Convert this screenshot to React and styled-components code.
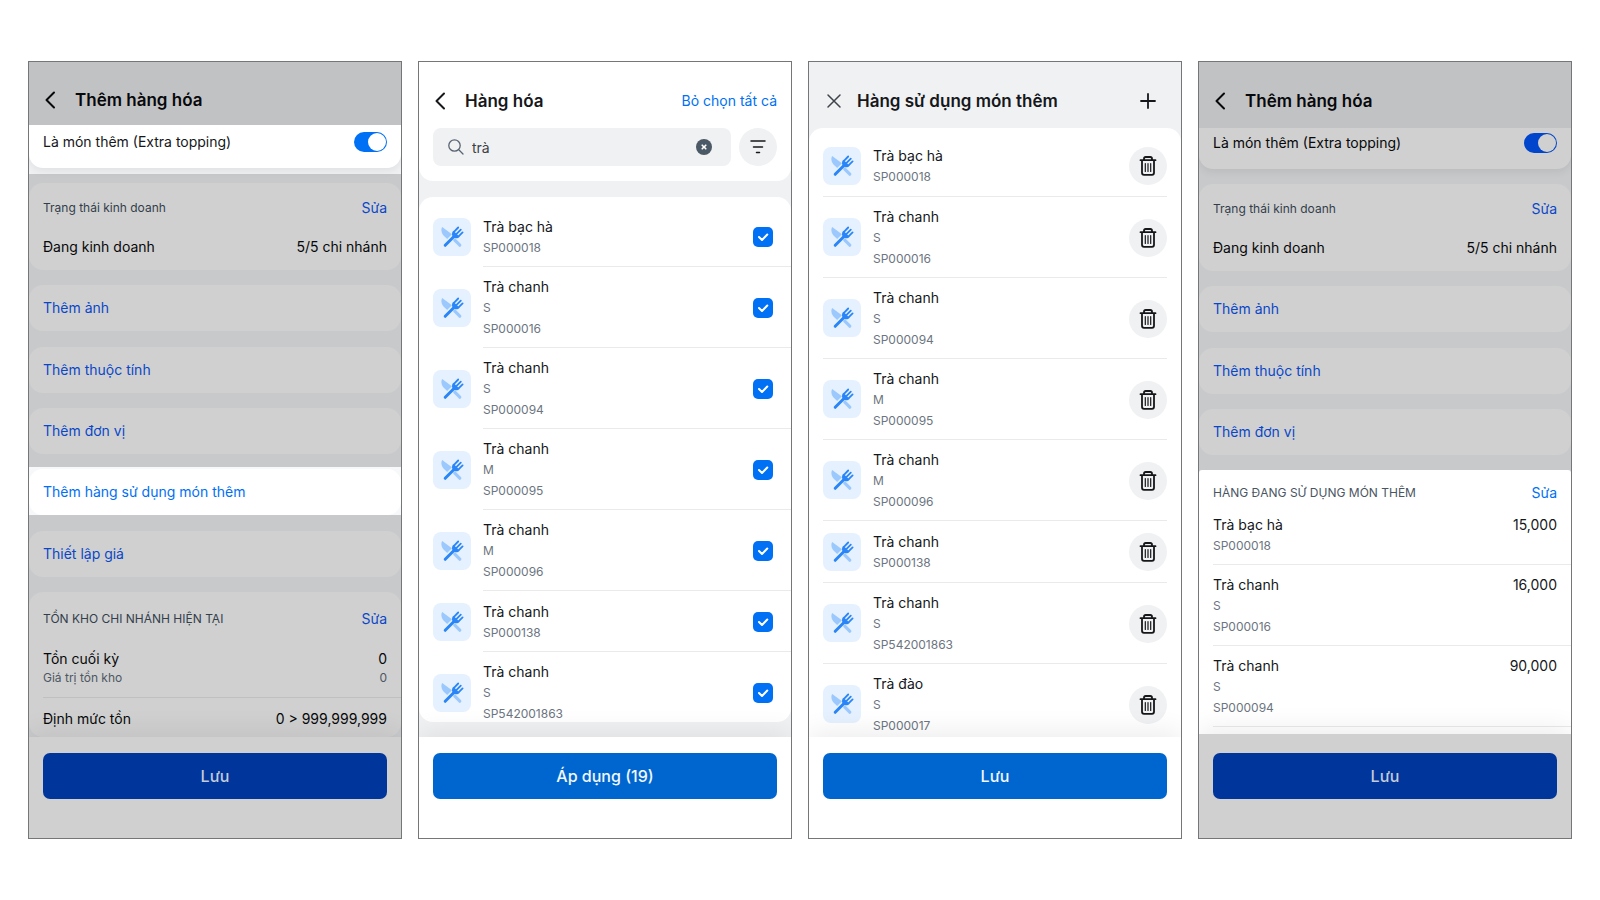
import React from "react";
import styled, { createGlobalStyle, css, ThemeProvider } from "styled-components";

const lit = {
  header: "#f0f1f3",
  page: "#f0f1f3",
  card: "#ffffff",
  text: "#15171a",
  label: "#4a5562",
  sub: "#6c7580",
  link: "#0070f4",
  line: "#e9eaec",
  button: "#0066cf",
  buttonText: "#f2f7fc",
  toggle: "#0070f4",
  knob: "#ffffff",
};

const dim = {
  header: "#c1c2c4",
  page: "#c8c9cb",
  card: "#d0d0d0",
  text: "#07080a",
  label: "#333e4c",
  sub: "#4d5763",
  link: "#0a47c8",
  line: "#bfc0c2",
  button: "#00369c",
  buttonText: "#c3cbd8",
  toggle: "#0045cc",
  knob: "#d0d0d0",
};

const GlobalStyle = createGlobalStyle`
  *, *::before, *::after { box-sizing: border-box; }
  body { margin: 0; background: #fff; }
  body, button, input { font-family: Inter, "Noto Sans", sans-serif; }
  button { border: 0; padding: 0; background: none; cursor: pointer; }
  h1, h2, p, ul { margin: 0; padding: 0; font-weight: 400; }
  ul { list-style: none; }
`;

const Board = styled.main`
  display: grid;
  grid-template-columns: repeat(4, minmax(0, 1fr));
  gap: 16px;
  padding: 61px 28px;
`;

const Phone = styled.section`
  display: flex;
  flex-direction: column;
  height: calc(100vh - 122px);
  border: 1px solid #757678;
  background: ${(p) => p.theme.page};
  overflow: hidden;
`;

const Header = styled.header`
  display: flex;
  align-items: flex-end;
  flex: none;
  height: ${(p) => (p.$tall ? 66 : 63)}px;
  padding: 0 14px ${(p) => (p.$tall ? 15 : 13)}px;
  background: ${(p) => (p.$white ? p.theme.card : p.theme.header)};
`;

const Title = styled.h1`
  flex: 1;
  font-size: 17px;
  font-weight: 600;
  line-height: 24px;
  white-space: nowrap;
  color: ${(p) => p.theme.text};
`;

const IconButton = styled.button`
  display: flex;
  align-items: center;
  flex: none;
  width: ${(p) => p.$width}px;
  height: 24px;
  color: ${(p) => p.theme.text};
`;

const LinkButton = styled.button`
  font-size: 14px;
  line-height: 20px;
  white-space: nowrap;
  color: ${(p) => p.theme.link};
`;

const HeaderLink = styled(LinkButton)`
  line-height: 24px;
`;

const Scroller = styled.div`
  display: flex;
  flex-direction: column;
  flex: 1;
  min-height: 0;
  overflow: hidden;
`;

const Group = styled.div`
  display: flex;
  flex-direction: column;
  justify-content: space-between;
  flex: 1;
  min-height: 0;
  padding-top: 9px;
`;

const Card = styled.section`
  flex: none;
  padding: 0 14px;
  border-radius: 14px;
  background: ${(p) => p.theme.card};
`;

const ToggleBand = styled.div`
  flex: none;
  padding-bottom: 6px;
  background: ${(p) => p.theme.page};
`;

const ToggleCard = styled.label`
  display: flex;
  justify-content: space-between;
  align-items: flex-start;
  height: ${(p) => (p.$compact ? 41 : 43)}px;
  padding: ${(p) => (p.$compact ? 5 : 7)}px 14px 0;
  border-radius: 0 0 14px 14px;
  background: ${(p) => p.theme.card};
  box-shadow: 0 3px 8px rgba(0, 0, 0, 0.07);
  font-size: 14px;
  line-height: 20px;
  color: ${(p) => p.theme.text};
`;

const Toggle = styled.input`
  appearance: none;
  display: flex;
  justify-content: flex-end;
  width: 33px;
  height: 20px;
  margin: 0;
  padding: 1px;
  border-radius: 10px;
  background: ${(p) => p.theme.toggle};

  &::before {
    content: "";
    width: 18px;
    height: 18px;
    border-radius: 50%;
    background: ${(p) => p.theme.knob};
  }
`;

const StatusCard = styled(Card)`
  padding: 15px 14px 13px;
`;

const LinkCard = styled(Card)`
  display: flex;
  align-items: center;
  height: 46px;
`;

const LitBand = styled.div`
  flex: none;
  margin-top: -2px;
  padding-top: 2px;
  background: #f7f8f9;
`;

const StockCard = styled(Card)`
  padding: 17px 0 8px 14px;
`;

const Line = styled.div`
  display: flex;
  justify-content: space-between;
  align-items: center;
  margin-top: ${(p) => p.$top || 0}px;
  padding-right: ${(p) => (p.$inset ? 14 : 0)}px;
`;

const Label = styled.h2`
  font-size: 12px;
  line-height: 20px;
  color: ${(p) => p.theme.label};
`;

const Text = styled.p`
  font-size: 14px;
  line-height: 21px;
  color: ${(p) => p.theme.text};
`;

const Note = styled.p`
  font-size: 12px;
  line-height: 18px;
  color: ${(p) => p.theme.sub};
`;

const Rule = styled.hr`
  height: 1px;
  margin: 10px 0 0;
  border: 0;
  background: ${(p) => p.theme.line};
`;

const Footer = styled.footer`
  flex: none;
  z-index: 1;
  height: ${(p) => (p.$tall ? 104 : 101)}px;
  padding: ${(p) => (p.$tall ? 19 : 16)}px 14px 0;
  background: ${(p) => p.theme.card};
  box-shadow: 0 -6px 24px rgba(0, 0, 0, 0.07);
`;

const PrimaryButton = styled.button`
  width: 100%;
  height: 46px;
  border-radius: 7px;
  font-size: 16px;
  font-weight: 500;
  background: ${(p) => p.theme.button};
  color: ${(p) => p.theme.buttonText};
`;

const SearchHeader = styled.div`
  flex: none;
  padding-bottom: 15px;
  margin-bottom: 16px;
  border-radius: 0 0 14px 14px;
  background: #fff;
  overflow: hidden;
`;

const SearchRow = styled.div`
  display: flex;
  gap: 8px;
  padding: 0 14px;
`;

const SearchBox = styled.label`
  display: flex;
  align-items: center;
  flex: 1;
  min-width: 0;
  height: 38px;
  padding: 0 19px 0 15px;
  border-radius: 8px;
  background: #f0f1f3;
`;

const SearchInput = styled.input`
  flex: 1;
  min-width: 0;
  padding: 0 8px;
  border: 0;
  outline: 0;
  background: none;
  font-size: 14px;
  color: #3c4146;
`;

const ClearButton = styled.button`
  display: flex;
  width: 16px;
  height: 16px;
`;

const RoundButton = styled.button`
  display: flex;
  align-items: center;
  justify-content: center;
  flex: none;
  width: 38px;
  height: 38px;
  border-radius: 50%;
  background: #f0f1f3;
`;

const List = styled.ul`
  flex: 1;
  min-height: 0;
  padding-top: ${(p) => (p.$rounded ? 9 : 7)}px;
  border-radius: ${(p) => (p.$rounded ? "14px" : "14px 14px 0 0")};
  margin-bottom: ${(p) => (p.$rounded ? 15 : 0)}px;
  background: #fff;
  overflow: hidden;
`;

const ruled = css`
  border-bottom: 1px solid ${(p) => p.theme.line};
`;

const Row = styled.li`
  display: flex;
  align-items: center;
  gap: 12px;
  min-height: 61px;
  ${(p) => (p.$ruled ? "margin: 0 14px;" : "padding-left: 14px;")}
  ${(p) => p.$ruled && ruled}
`;

const RowBody = styled.div`
  display: flex;
  align-items: center;
  flex: 1;
  min-width: 0;
  min-height: 61px;
  padding: 9px 0 8px;
  ${(p) => p.$ruled && ruled}
  ${(p) => p.$ruled && "padding-right: 18px;"}
`;

const Names = styled.div`
  flex: 1;
  min-width: 0;
`;

const Code = styled.p`
  font-size: 12px;
  line-height: 21px;
  color: ${(p) => p.theme.sub};
`;

const Thumb = styled.span`
  display: flex;
  align-items: center;
  justify-content: center;
  flex: none;
  width: 38px;
  height: 38px;
  border-radius: 8px;
  background: #e5f1ff;
`;

const Tick = styled.span`
  display: grid;
  place-items: center;
  width: 20px;
  height: 20px;

  & > * { grid-area: 1 / 1; }
  & > svg { pointer-events: none; }
`;

const TickInput = styled.input`
  appearance: none;
  width: 20px;
  height: 20px;
  margin: 0;
  border-radius: 5px;
  background: ${(p) => p.theme.link};
`;

const UsedCard = styled.section`
  flex: none;
  height: 264px;
  padding: 13px 0 0 14px;
  border-radius: 3px 3px 0 0;
  background: #fff;
  overflow: hidden;
`;

const UsedRow = styled.li`
  display: flex;
  justify-content: space-between;
  padding: 9px 14px 8px 0;
  ${ruled}

  &:first-child { padding-top: 11px; }
`;

const BackIcon = () => (
  <svg width="16" height="20" viewBox="0 0 16 20" fill="none" stroke="currentColor" strokeWidth="2" strokeLinecap="round" strokeLinejoin="round" aria-hidden="true">
    <path d="M11 2.500 3.500 10l7.500 7.500" />
  </svg>
);

const CloseIcon = () => (
  <svg width="20" height="20" viewBox="0 0 20 20" fill="none" stroke="#3f444a" strokeWidth="1.500" strokeLinecap="round" aria-hidden="true">
    <path d="m5 4 12 12M17 4 5 16" />
  </svg>
);

const PlusIcon = () => (
  <svg width="16" height="16" viewBox="0 0 16 16" fill="none" stroke="currentColor" strokeWidth="1.800" strokeLinecap="round" aria-hidden="true">
    <path d="M8 1v14M1 8h14" />
  </svg>
);

const SearchIcon = () => (
  <svg width="16" height="16" viewBox="0 0 16 16" fill="none" stroke="#596573" strokeWidth="1.300" strokeLinecap="round" aria-hidden="true">
    <circle cx="6.500" cy="6.500" r="5.700" />
    <path d="m10.800 10.800 4.200 4.200" />
  </svg>
);

const ClearIcon = () => (
  <svg width="16" height="16" viewBox="0 0 16 16" aria-hidden="true">
    <circle cx="8" cy="8" r="8" fill="#4b5866" />
    <path d="m6.200 6.200 3.600 3.600m0-3.600-3.600 3.600" stroke="#fff" strokeWidth="1.600" strokeLinecap="round" />
  </svg>
);

const FilterIcon = () => (
  <svg width="16" height="14" viewBox="0 0 16 14" fill="none" stroke="#15171a" strokeWidth="1.500" strokeLinecap="round" aria-hidden="true">
    <path d="M1 1h14M3.500 7h9M6.500 12.500h3" />
  </svg>
);

const TrashIcon = () => (
  <svg width="18" height="20" viewBox="0 0 18 20" fill="none" stroke="#15171a" strokeLinecap="round" strokeLinejoin="round" aria-hidden="true">
    <path d="M1.500 4.200h15M5 4V2.800C5 1.800 5.700 1 6.700 1h4.600c1 0 1.700.8 1.700 1.800V4M3 4.500v12.300c0 1.200.8 2 2 2h8c1.200 0 2-.8 2-2V4.500" strokeWidth="1.800" />
    <path d="M6.300 7.500v8M9 7.500v8M11.700 7.500v8" strokeWidth="1.200" />
  </svg>
);

const CutleryIcon = () => (
  <svg width="24" height="24" viewBox="0 0 24 24" fill="none" aria-hidden="true">
    <path d="M2.200 1.900C.7 4.200 1.200 8 4 10.900l3.200 3 4.800-4.600Z" fill="#9cc9fd" />
    <path d="m14.800 15.200 5 5" stroke="#9cc9fd" strokeWidth="3.200" strokeLinecap="round" />
    <path d="m5.200 20.300 9.500-9.500" stroke="#2a86f7" strokeWidth="3" strokeLinecap="round" />
    <path d="M12.400 11c-.8-2-.4-3.800 1-5.200l6.200 6c-1.500 1.500-3.200 1.800-5.200 1.200Z" fill="#2a86f7" />
    <path d="m14.200 6.600 4-4.100M16.800 8.600l4-4M18.800 11.200l3.800-3.800" stroke="#2a86f7" strokeWidth="1.800" strokeLinecap="round" />
  </svg>
);

const CheckIcon = () => (
  <svg width="20" height="20" viewBox="0 0 20 20" fill="none" stroke="#fff" strokeWidth="2" strokeLinecap="round" strokeLinejoin="round" aria-hidden="true">
    <path d="m6 10 3 3 5.300-5.500" />
  </svg>
);

const items = [
  { name: "Trà bạc hà", code: "SP000018", price: "15,000" },
  { name: "Trà chanh", size: "S", code: "SP000016", price: "16,000" },
  { name: "Trà chanh", size: "S", code: "SP000094", price: "90,000" },
  { name: "Trà chanh", size: "M", code: "SP000095" },
  { name: "Trà chanh", size: "M", code: "SP000096" },
  { name: "Trà chanh", code: "SP000138" },
  { name: "Trà chanh", size: "S", code: "SP542001863" },
  { name: "Trà đào", size: "S", code: "SP000017" },
];

const ItemNames = ({ item }) => (
  <Names>
    <Text>{item.name}</Text>
    {item.size && <Code>{item.size}</Code>}
    <Code>{item.code}</Code>
  </Names>
);

const PhoneFooter = ({ tall, children }) => (
  <Footer $tall={tall}>
    <PrimaryButton type="button">{children}</PrimaryButton>
  </Footer>
);

const FormHeader = ({ tall }) => (
  <Header $tall={tall}>
    <IconButton type="button" $width={32} aria-label="Quay lại"><BackIcon /></IconButton>
    <Title>Thêm hàng hóa</Title>
  </Header>
);

const ToppingToggle = ({ compact }) => (
  <ToggleBand>
    <ToggleCard $compact={compact}>
      Là món thêm (Extra topping)
      <Toggle type="checkbox" role="switch" defaultChecked />
    </ToggleCard>
  </ToggleBand>
);

const Status = () => (
  <StatusCard>
    <Line>
      <Label>Trạng thái kinh doanh</Label>
      <LinkButton type="button">Sửa</LinkButton>
    </Line>
    <Line $top={18}>
      <Text>Đang kinh doanh</Text>
      <Text>5/5 chi nhánh</Text>
    </Line>
  </StatusCard>
);

const AddCard = ({ children }) => (
  <LinkCard><LinkButton type="button">{children}</LinkButton></LinkCard>
);

const AddProductScreen = () => (
  <ThemeProvider theme={dim}>
    <Phone>
      <FormHeader />
      <Scroller>
        <ThemeProvider theme={lit}><ToppingToggle /></ThemeProvider>
        <Group>
          <Status />
          <AddCard>Thêm ảnh</AddCard>
          <AddCard>Thêm thuộc tính</AddCard>
          <AddCard>Thêm đơn vị</AddCard>
          <ThemeProvider theme={lit}>
            <LitBand><AddCard>Thêm hàng sử dụng món thêm</AddCard></LitBand>
          </ThemeProvider>
          <AddCard>Thiết lập giá</AddCard>
          <StockCard>
            <Line $inset>
              <Label>TỒN KHO CHI NHÁNH HIỆN TẠI</Label>
              <LinkButton type="button">Sửa</LinkButton>
            </Line>
            <Line $inset $top={19}>
              <Text>Tồn cuối kỳ</Text>
              <Text>0</Text>
            </Line>
            <Line $inset>
              <Note>Giá trị tồn kho</Note>
              <Note>0</Note>
            </Line>
            <Rule />
            <Line $inset $top={10}>
              <Text>Định mức tồn</Text>
              <Text>0 &gt; 999,999,999</Text>
            </Line>
          </StockCard>
        </Group>
      </Scroller>
      <PhoneFooter>Lưu</PhoneFooter>
    </Phone>
  </ThemeProvider>
);

const PickScreen = () => (
  <ThemeProvider theme={lit}>
    <Phone>
      <SearchHeader>
        <Header $tall $white>
          <IconButton type="button" $width={32} aria-label="Quay lại"><BackIcon /></IconButton>
          <Title>Hàng hóa</Title>
          <HeaderLink type="button">Bỏ chọn tất cả</HeaderLink>
        </Header>
        <SearchRow>
          <SearchBox>
            <SearchIcon />
            <SearchInput type="text" defaultValue="trà" aria-label="Tìm hàng hóa" />
            <ClearButton type="button" aria-label="Xóa"><ClearIcon /></ClearButton>
          </SearchBox>
          <RoundButton type="button" aria-label="Lọc"><FilterIcon /></RoundButton>
        </SearchRow>
      </SearchHeader>
      <List $rounded>
        {items.slice(0, 7).map((item) => (
          <Row key={item.code}>
            <Thumb><CutleryIcon /></Thumb>
            <RowBody $ruled>
              <ItemNames item={item} />
              <Tick>
                <TickInput type="checkbox" defaultChecked aria-label={`${item.name} ${item.code}`} />
                <CheckIcon />
              </Tick>
            </RowBody>
          </Row>
        ))}
      </List>
      <PhoneFooter>Áp dụng (19)</PhoneFooter>
    </Phone>
  </ThemeProvider>
);

const SelectedScreen = () => (
  <ThemeProvider theme={lit}>
    <Phone>
      <Header $tall>
        <IconButton type="button" $width={34} aria-label="Đóng"><CloseIcon /></IconButton>
        <Title>Hàng sử dụng món thêm</Title>
        <IconButton type="button" $width={27} aria-label="Thêm hàng"><PlusIcon /></IconButton>
      </Header>
      <List>
        {items.map((item) => (
          <Row key={item.code} $ruled>
            <Thumb><CutleryIcon /></Thumb>
            <RowBody>
              <ItemNames item={item} />
              <RoundButton type="button" aria-label={`Xóa ${item.name} ${item.code}`}><TrashIcon /></RoundButton>
            </RowBody>
          </Row>
        ))}
      </List>
      <PhoneFooter>Lưu</PhoneFooter>
    </Phone>
  </ThemeProvider>
);

const ResultScreen = () => (
  <ThemeProvider theme={dim}>
    <Phone>
      <FormHeader tall />
      <Scroller>
        <ToppingToggle compact />
        <Group>
          <Status />
          <AddCard>Thêm ảnh</AddCard>
          <AddCard>Thêm thuộc tính</AddCard>
          <AddCard>Thêm đơn vị</AddCard>
          <ThemeProvider theme={lit}>
            <UsedCard>
              <Line $inset>
                <Label>HÀNG ĐANG SỬ DỤNG MÓN THÊM</Label>
                <LinkButton type="button">Sửa</LinkButton>
              </Line>
              <ul>
                {items.slice(0, 3).map((item) => (
                  <UsedRow key={item.code}>
                    <ItemNames item={item} />
                    <Text>{item.price}</Text>
                  </UsedRow>
                ))}
              </ul>
            </UsedCard>
          </ThemeProvider>
        </Group>
      </Scroller>
      <PhoneFooter tall>Lưu</PhoneFooter>
    </Phone>
  </ThemeProvider>
);

export default function App() {
  return (
    <>
      <GlobalStyle />
      <Board>
        <AddProductScreen />
        <PickScreen />
        <SelectedScreen />
        <ResultScreen />
      </Board>
    </>
  );
}
